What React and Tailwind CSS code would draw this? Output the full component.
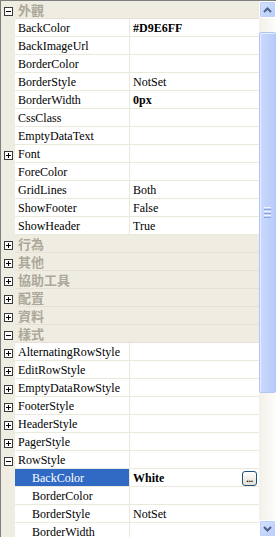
const rows = [
  { type: 'cat', name: '外觀', open: true },
  { name: 'BackColor', value: '#D9E6FF', bold: true },
  { name: 'BackImageUrl' },
  { name: 'BorderColor' },
  { name: 'BorderStyle', value: 'NotSet' },
  { name: 'BorderWidth', value: '0px', bold: true },
  { name: 'CssClass' },
  { name: 'EmptyDataText' },
  { name: 'Font', icon: 'plus' },
  { name: 'ForeColor' },
  { name: 'GridLines', value: 'Both' },
  { name: 'ShowFooter', value: 'False' },
  { name: 'ShowHeader', value: 'True' },
  { type: 'cat', name: '行為' },
  { type: 'cat', name: '其他' },
  { type: 'cat', name: '協助工具' },
  { type: 'cat', name: '配置' },
  { type: 'cat', name: '資料' },
  { type: 'cat', name: '樣式', open: true },
  { name: 'AlternatingRowStyle', icon: 'plus' },
  { name: 'EditRowStyle', icon: 'plus' },
  { name: 'EmptyDataRowStyle', icon: 'plus' },
  { name: 'FooterStyle', icon: 'plus' },
  { name: 'HeaderStyle', icon: 'plus' },
  { name: 'PagerStyle', icon: 'plus' },
  { name: 'RowStyle', icon: 'minus' },
  { name: 'BackColor', value: 'White', bold: true, child: true, selected: true },
  { name: 'BorderColor', child: true },
  { name: 'BorderStyle', value: 'NotSet', child: true },
  { name: 'BorderWidth', child: true },
]

function ExpandBox({ open }) {
  return (
    <div className="relative h-[9px] w-[9px] border border-[#3a3a3a] bg-white">
      <div className="absolute left-[1px] top-[3px] h-[1px] w-[5px] bg-black" />
      {!open && <div className="absolute left-[3px] top-[1px] h-[5px] w-[1px] bg-black" />}
    </div>
  )
}

function CategoryRow({ row }) {
  return (
    <div className="flex h-[18px] shrink-0">
      <div className="flex w-[14px] items-center justify-center pt-[2px]">
        <ExpandBox open={row.open} />
      </div>
      <div className="flex flex-1 items-center border-b border-[#e4e1d4] pl-[3px] text-[13px] font-bold text-[#aca899] [font-family:'Noto_Sans_CJK_TC','Noto_Sans_CJK_JP',sans-serif]">
        {row.name}
      </div>
    </div>
  )
}

function PropRow({ row }) {
  return (
    <div className="flex h-[18px] shrink-0">
      <div className="flex w-[14px] items-center justify-center pt-[2px]">
        {row.icon && <ExpandBox open={row.icon === 'minus'} />}
      </div>
      <div
        className={`flex w-[115px] items-center border-r border-b border-[#ebe8dc] pt-[1px] ${
          row.selected ? 'bg-[#316ac5] text-white' : 'bg-white text-black'
        } ${row.child ? 'pl-[17px]' : 'pl-[3px]'}`}
      >
        {row.name}
      </div>
      <div className="flex flex-1 items-center border-b border-[#ebe8dc] bg-white pt-[1px] pl-[3px] pr-[2px]">
        <span className={row.bold ? 'font-bold' : ''}>{row.value}</span>
        {row.selected && (
          <div className="ml-auto flex h-[15px] w-[15px] items-end justify-center rounded-[3px] border border-[#1c5180] bg-gradient-to-b from-white to-[#e3e0d3] pb-[1px] text-[9px] leading-[9px] font-bold">
            ...
          </div>
        )}
      </div>
    </div>
  )
}

function Chevron({ up }) {
  return (
    <svg width="9" height="6" viewBox="0 0 9 6">
      <path
        d={up ? 'M1 5 L4.5 1.5 L8 5' : 'M1 1 L4.5 4.5 L8 1'}
        fill="none"
        stroke="#4d6185"
        strokeWidth="2"
      />
    </svg>
  )
}

function ScrollButton({ up }) {
  return (
    <div className="flex h-[17px] w-[17px] shrink-0 items-center justify-center rounded-[2px] border border-white bg-gradient-to-br from-[#d4e1fd] to-[#b9cdfa] shadow-[inset_0_0_0_1px_#bcd0f8]">
      <Chevron up={up} />
    </div>
  )
}

function ScrollBar() {
  return (
    <div className="flex w-[17px] flex-col bg-gradient-to-r from-[#f2f0e8] to-[#fdfdfa]">
      <ScrollButton up />
      <div className="h-[14px] shrink-0" />
      <div className="flex h-[361px] shrink-0 flex-col items-center justify-center gap-[1px] rounded-[2px] border border-[#b2c6f5] bg-gradient-to-r from-[#cad9fd] to-[#b8ccf9] shadow-[inset_1px_1px_0_#e6eefe]">
        <div className="h-[1px] w-[7px] bg-[#eef3fe]" />
        <div className="h-[1px] w-[7px] bg-[#8ca6e4]" />
        <div className="h-[1px] w-[7px] bg-[#eef3fe]" />
        <div className="h-[1px] w-[7px] bg-[#8ca6e4]" />
        <div className="h-[1px] w-[7px] bg-[#eef3fe]" />
        <div className="h-[1px] w-[7px] bg-[#8ca6e4]" />
      </div>
      <div className="flex-1" />
      <ScrollButton />
    </div>
  )
}

export default function App() {
  return (
    <div className="flex h-[537px] w-[276px] overflow-hidden border-t border-l border-[#7f7f7f] bg-[#efede2] text-[12px] leading-none text-black [font-family:'Liberation_Serif',serif]">
      <div className="flex min-w-0 flex-1 flex-col">
        {rows.map((row, index) =>
          row.type === 'cat' ? (
            <CategoryRow key={index} row={row} />
          ) : (
            <PropRow key={index} row={row} />
          )
        )}
      </div>
      <ScrollBar />
    </div>
  )
}
